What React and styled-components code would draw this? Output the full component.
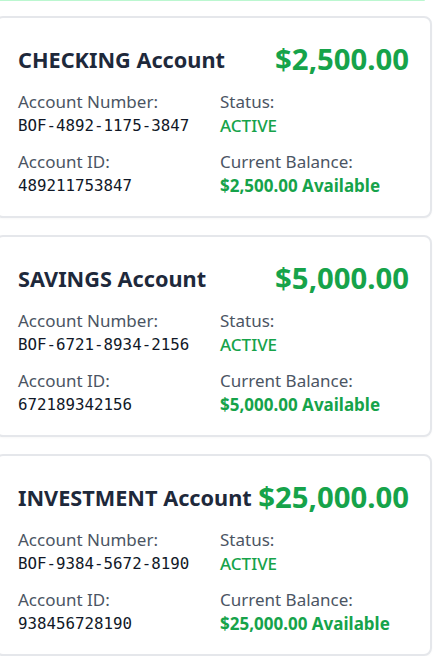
import React from "react";
import styled, { createGlobalStyle } from "styled-components";

const Global = createGlobalStyle`
  html, body { margin: 0; padding: 0; background: #ffffff; }
  body { font-family: "Noto Sans", "Open Sans", sans-serif; overflow: hidden; }
`;

const Page = styled.div`
  width: 437px;
  margin-left: -5px;
  display: flex;
  flex-direction: column;
  gap: 17px;
`;

const Notice = styled.div`
  width: 430px;
  height: 0;
  border-bottom: 1px solid #bbf7d0;
  border-radius: 0 0 6px 6px;
  margin-bottom: -2px;
`;

const Card = styled.section`
  border: 2px solid #e5e7eb;
  border-radius: 8px;
  background: #ffffff;
  padding: 20px 21px 18px;
  box-shadow: 0 1px 2px rgba(0, 0, 0, 0.03);
`;

const Header = styled.div`
  display: flex;
  align-items: center;
  justify-content: space-between;
  gap: 4px;
  height: 42px;
  margin-bottom: 10px;
`;

const Title = styled.h3`
  margin: 0;
  font-size: 21.7px;
  font-weight: 700;
  color: #1e293b;
  white-space: nowrap;
`;

const Amount = styled.div`
  font-size: 29.3px;
  font-weight: 700;
  color: #16a34a;
  white-space: nowrap;
`;

const Grid = styled.div`
  display: grid;
  grid-template-columns: 1fr 1fr;
  column-gap: 13px;
  row-gap: 12px;
`;

const Field = styled.div`
  display: flex;
  flex-direction: column;
`;

const Label = styled.span`
  font-size: 17px;
  line-height: 24px;
  color: #4b5563;
`;

const Value = styled.span`
  font-size: ${(p) => (p.$mono ? "15.8px" : "17px")};
  line-height: 24px;
  font-family: ${(p) =>
    p.$mono ? '"DejaVu Sans Mono", "Liberation Mono", monospace' : "inherit"};
  color: ${(p) => (p.$green ? "#16a34a" : "#111827")};
  font-weight: ${(p) => (p.$bold ? 700 : p.$green ? 500 : 400)};
`;

const accounts = [
  { type: "CHECKING", balance: "$2,500.00", number: "BOF-4892-1175-3847", id: "489211753847" },
  { type: "SAVINGS", balance: "$5,000.00", number: "BOF-6721-8934-2156", id: "672189342156" },
  { type: "INVESTMENT", balance: "$25,000.00", number: "BOF-9384-5672-8190", id: "938456728190" },
];

export default function App() {
  return (
    <>
      <Global />
      <Page>
        <Notice />
        {accounts.map((a) => (
          <Card key={a.type}>
            <Header>
              <Title>{a.type} Account</Title>
              <Amount>{a.balance}</Amount>
            </Header>
            <Grid>
              <Field>
                <Label>Account Number:</Label>
                <Value $mono>{a.number}</Value>
              </Field>
              <Field>
                <Label>Status:</Label>
                <Value $green>ACTIVE</Value>
              </Field>
              <Field>
                <Label>Account ID:</Label>
                <Value $mono>{a.id}</Value>
              </Field>
              <Field>
                <Label>Current Balance:</Label>
                <Value $green $bold>{a.balance} Available</Value>
              </Field>
            </Grid>
          </Card>
        ))}
      </Page>
    </>
  );
}
